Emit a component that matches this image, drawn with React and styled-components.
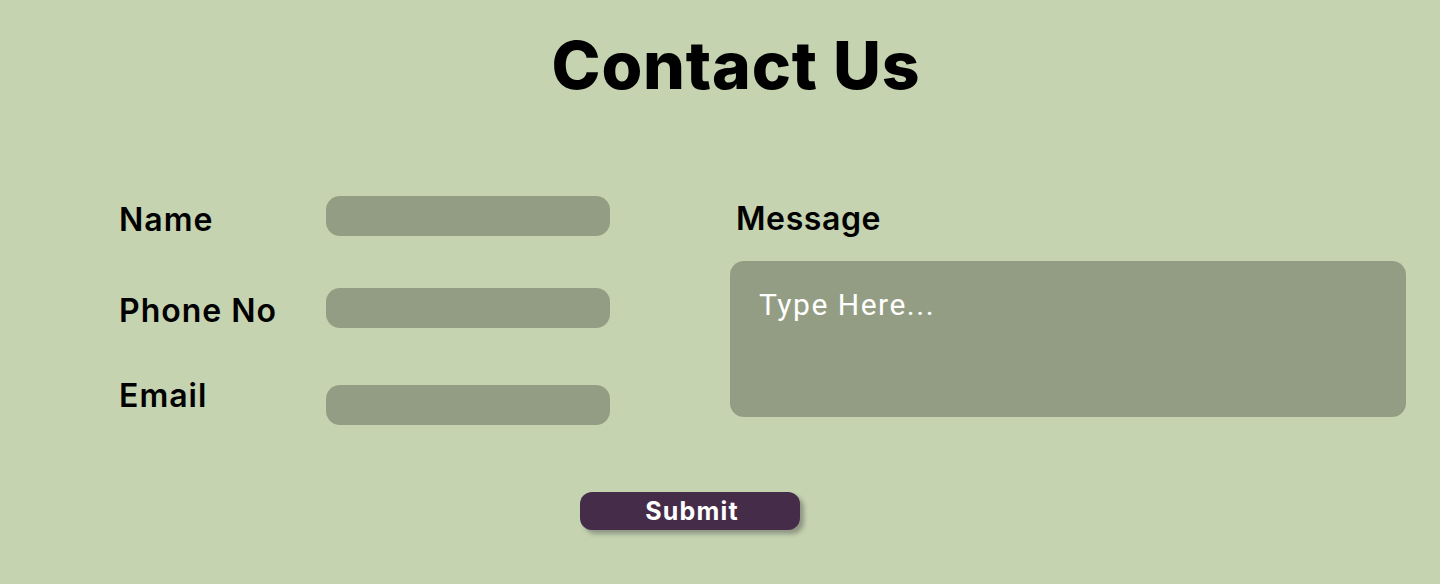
import React from 'react';
import styled, { createGlobalStyle } from 'styled-components';

const GlobalStyle = createGlobalStyle`
  html, body {
    margin: 0;
    padding: 0;
    background-color: #c5d3b0;
  }
  * {
    box-sizing: border-box;
  }
`;

const Page = styled.div`
  width: 1440px;
  height: 584px;
  background-color: #c5d3b0;
  font-family: Inter, "Open Sans", sans-serif;
  color: #000;
  overflow: hidden;
`;

const Title = styled.h1`
  margin: 0;
  padding-top: 27px;
  padding-left: 32px;
  text-align: center;
  font-size: 66px;
  line-height: 76px;
  font-weight: 800;
  letter-spacing: 0.8px;
`;

const FormGrid = styled.form`
  display: grid;
  grid-template-columns: 491px 1fr;
  column-gap: 120px;
  padding: 93px 34px 0 119px;
`;

const LeftColumn = styled.div`
  display: flex;
  flex-direction: column;
  gap: 52px;
`;

const Row = styled.div`
  display: flex;
  align-items: center;
  margin-top: ${(p) => p.$top || 0}px;
`;

const Label = styled.label`
  width: 207px;
  font-size: 32px;
  font-weight: 600;
  letter-spacing: 1px;
  transform: translateY(${(p) => p.$shift || 0}px);
`;

const Input = styled.input`
  width: 284px;
  height: 40px;
  border: none;
  border-radius: 14px;
  background-color: #939d83;
  outline: none;
`;

const RightColumn = styled.div`
  display: flex;
  flex-direction: column;
`;

const MessageLabel = styled.label`
  margin-left: 6px;
  font-size: 32px;
  font-weight: 600;
  letter-spacing: 0.6px;
  line-height: 44px;
  margin-top: 1px;
  margin-bottom: 20px;
`;

const TextArea = styled.textarea`
  width: 676px;
  height: 156px;
  border: none;
  border-radius: 14px;
  background-color: #939d83;
  padding: 26px 29px;
  resize: none;
  outline: none;
  font-family: Roboto, sans-serif;
  font-weight: 400;
  font-size: 30px;
  letter-spacing: 1.5px;
  color: #fff;

  &::placeholder {
    color: #fff;
    opacity: 1;
  }
`;

const Footer = styled.div`
  display: flex;
  justify-content: center;
  padding-top: 67px;
  padding-right: 60px;
`;

const SubmitButton = styled.button`
  width: 220px;
  height: 38px;
  border: none;
  border-radius: 12px;
  background-color: #452d4a;
  color: #fff;
  font-family: Inter, "Open Sans", sans-serif;
  font-size: 25px;
  font-weight: 700;
  letter-spacing: 1.2px;
  padding: 0 0 0 4px;
  box-shadow: 4px 4px 4px rgba(80, 80, 80, 0.45);
  cursor: pointer;
`;

export default function App() {
  return (
    <Page>
      <GlobalStyle />
      <Title>Contact Us</Title>
      <FormGrid>
        <LeftColumn>
          <Row>
            <Label $shift={3}>Name</Label>
            <Input type="text" />
          </Row>
          <Row>
            <Label $shift={2}>Phone No</Label>
            <Input type="tel" />
          </Row>
          <Row $top={5}>
            <Label $shift={-10}>Email</Label>
            <Input type="email" />
          </Row>
        </LeftColumn>
        <RightColumn>
          <MessageLabel>Message</MessageLabel>
          <TextArea placeholder="Type Here..." />
        </RightColumn>
      </FormGrid>
      <Footer>
        <SubmitButton type="button">Submit</SubmitButton>
      </Footer>
    </Page>
  );
}
